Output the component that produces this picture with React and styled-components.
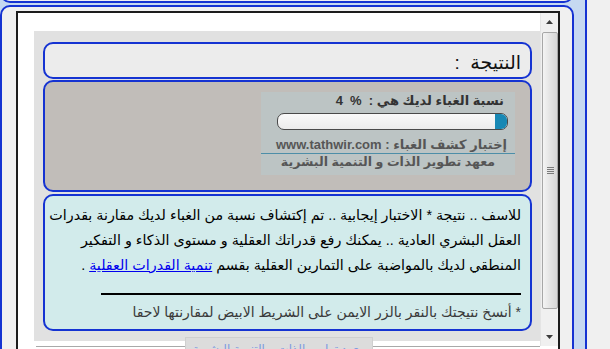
import React from 'react';
import styled, { createGlobalStyle } from 'styled-components';

const GlobalStyle = createGlobalStyle`
  html, body {
    margin: 0;
    padding: 0;
    background: #f0f0f0;
    overflow: hidden;
  }
  body {
    font-family: "Liberation Sans", "DejaVu Sans", sans-serif;
  }
`;

const blue = '#1533d2';

const Shell = styled.div`
  width: 585px;
  height: 349px;
  background: #c6d9f1;
  border-right: 2px solid ${blue};
  overflow: hidden;
`;

const TopBox = styled.div`
  box-sizing: border-box;
  width: 574px;
  height: 33px;
  margin-top: -30px;
  border: 2px solid ${blue};
  border-radius: 10px;
  background: #f0f0f0;
`;

const MainBox = styled.div`
  box-sizing: border-box;
  width: 574px;
  height: 420px;
  margin-top: 2px;
  padding: 4px 12px 0 14px;
  border: 2px solid ${blue};
  border-radius: 10px;
  background: #f0f0f0;
`;

const Frame = styled.div`
  display: flex;
  height: 400px;
  border: 2px solid #1c1c1c;
  border-bottom: none;
  background: #fff;
`;

const Viewport = styled.div`
  position: relative;
  flex: 1;
  min-width: 0;
  overflow: hidden;
  padding: 18px 0 0 16px;
`;

const Panel = styled.div`
  direction: rtl;
  display: flex;
  flex-direction: column;
  gap: 1px;
  padding: 11px 8px 10px 9px;
  background: #e1e1e1;
`;

const Box = styled.div`
  box-sizing: border-box;
  border: 2px solid ${blue};
  border-radius: 10px;
  background: ${p => p.$bg};
`;

const TitleBox = styled(Box)`
  height: 37px;
  display: flex;
  align-items: center;
  padding: 3px 9px 0 0;
  font-size: 19px;
  color: #111;
`;

const ImageBox = styled(Box)`
  height: 112px;
  padding: 10px 15px 0 0;
`;

const Banner = styled.div`
  box-sizing: border-box;
  width: 254px;
  height: 83px;
  padding: 1px 0 0;
  background: #bcc4c4;
  color: #565656;
  font-weight: bold;
`;

const ScoreLine = styled.div`
  padding-right: 11px;
  font-size: 13px;
  line-height: 16px;
  color: #333;
  white-space: nowrap;
`;

const Bar = styled.div`
  box-sizing: border-box;
  width: 231px;
  height: 17px;
  margin: 4px 7px 0 0;
  border: 1.5px solid #4a4a4a;
  border-radius: 7px;
  background: linear-gradient(#fafafa, #ececec);
  overflow: hidden;
  display: flex;
`;

const BarFill = styled.div`
  height: 100%;
  background: #1888b4;
`;

const SiteLine = styled.div`
  margin-top: 7px;
  padding: 0 8px 1px 0;
  border-bottom: 1.5px solid #4d8ea8;
  font-size: 13px;
  line-height: 15px;
  white-space: nowrap;
`;

const InstLine = styled.div`
  text-align: center;
  font-size: 12.6px;
  line-height: 16px;
  white-space: nowrap;
`;

const TextBox = styled(Box)`
  height: 137px;
  margin-top: 1px;
  padding: 7px 9px 0 0;
  color: #000;
`;

const Para = styled.p`
  margin: 0;
  font-size: 14.3px;
  line-height: 25px;
  white-space: nowrap;

  a {
    color: #0000ee;
    text-decoration: underline;
  }
`;

const Rule = styled.div`
  width: 420px;
  height: 2px;
  margin-top: 15px;
  background: #000;
`;

const Note = styled.p`
  margin: 7px 0 0;
  font-size: 14px;
  line-height: 20px;
  color: #3a3a3a;
  white-space: nowrap;
`;

const NextBox = styled.div`
  height: 40px;
  margin: 5px 0 0 2px;
  border-top: 1px solid #a9a9a9;
`;

const Strip = styled.div`
  position: absolute;
  left: 167px;
  top: 324px;
  width: 188px;
  height: 24px;
  direction: rtl;
  box-sizing: border-box;
  padding-top: 4px;
  background: #dcdcdc;
  border: 1px solid #cfcfcf;
  color: #7f9ae0;
  font-size: 12px;
  text-align: center;
  white-space: nowrap;
`;

const Scrollbar = styled.div`
  flex: none;
  width: 17px;
  height: 333px;
  display: flex;
  flex-direction: column;
  background: #f0f0f0;
  border-left: 1px solid #e4e4e4;
`;

const ArrowButton = styled.div`
  height: 18px;
  display: flex;
  align-items: center;
  justify-content: center;
`;

const Thumb = styled.div`
  box-sizing: border-box;
  height: 277px;
  margin: 1px 0 0 1px;
  border: 1px solid #a7a7a7;
  border-radius: 2px;
  background: linear-gradient(90deg, #f4f4f4, #e4e4e4 50%, #d6d6d6);
  display: flex;
  align-items: center;
  justify-content: center;
`;

const Track = styled.div`
  flex: 1;
`;

const Grip = () => (
  <svg width="7" height="7" viewBox="0 0 7 7">
    {[0.5, 2.5, 4.5, 6.5].map(y => (
      <line key={y} x1="0" x2="7" y1={y} y2={y} stroke="#7a7a7a" strokeWidth="1" />
    ))}
  </svg>
);

const Arrow = ({ down }) => (
  <svg width="7" height="4" viewBox="0 0 7 4">
    <path d={down ? 'M0 0h7L3.5 4z' : 'M0 4h7L3.5 0z'} fill="#3c3c3c" />
  </svg>
);

export default function App() {
  return (
    <>
      <GlobalStyle />
      <Shell>
        <TopBox />
        <MainBox>
          <Frame>
            <Viewport>
              <Panel>
                <TitleBox $bg="#ececec">النتيجة&nbsp;&nbsp;:</TitleBox>
                <ImageBox $bg="#c1bdb9">
                  <Banner>
                    <ScoreLine>نسبة الغباء لديك هي :&nbsp;&nbsp;%&nbsp;&nbsp;4</ScoreLine>
                    <Bar>
                      <BarFill style={{ width: '12px' }} />
                    </Bar>
                    <SiteLine>إختبار كشف الغباء : www.tathwir.com</SiteLine>
                    <InstLine>معهد تطوير الذات و التنمية البشرية</InstLine>
                  </Banner>
                </ImageBox>
                <TextBox $bg="#d2ebeb">
                  <Para>للاسف .. نتيجة * الاختبار إيجابية .. تم إكتشاف نسبة من الغباء لديك مقارنة بقدرات</Para>
                  <Para>العقل البشري العادية .. يمكنك رفع قدراتك العقلية و مستوى الذكاء و التفكير</Para>
                  <Para>
                    المنطقي لديك بالمواضبة على التمارين العقلية بقسم <a href="#">تنمية القدرات العقلية</a> .
                  </Para>
                  <Rule />
                  <Note>* أنسخ نتيجتك بالنقر بالزر الايمن على الشريط الابيض لمقارنتها لاحقا</Note>
                </TextBox>
              </Panel>
              <NextBox />
              <Strip>معهد تطوير الذات و التنمية البشرية</Strip>
            </Viewport>
            <Scrollbar>
              <ArrowButton><Arrow /></ArrowButton>
              <Thumb><Grip /></Thumb>
              <Track />
              <ArrowButton><Arrow down /></ArrowButton>
            </Scrollbar>
          </Frame>
        </MainBox>
      </Shell>
    </>
  );
}
